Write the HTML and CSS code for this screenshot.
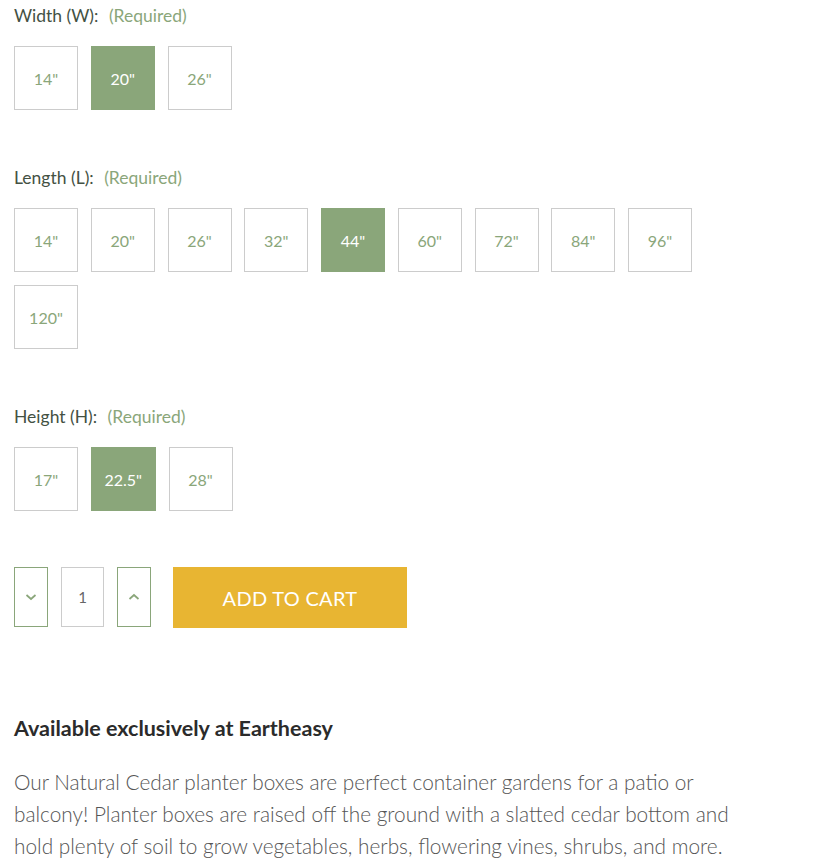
FILE: index.html
```html
<!DOCTYPE html>
<html lang="en">
<head>
<meta charset="utf-8">
<title>Planter options</title>
<link rel="stylesheet" href="styles.css">
</head>
<body>
<div class="product">
  <div class="field field-width">
    <div class="field-label">Width (W): <span class="req">(Required)</span></div>
    <div class="options">
      <span class="opt">14"</span>
      <span class="opt sel">20"</span>
      <span class="opt">26"</span>
    </div>
  </div>

  <div class="field field-length">
    <div class="field-label">Length (L): <span class="req">(Required)</span></div>
    <div class="options">
      <span class="opt">14"</span>
      <span class="opt">20"</span>
      <span class="opt">26"</span>
      <span class="opt">32"</span>
      <span class="opt sel">44"</span>
      <span class="opt">60"</span>
      <span class="opt">72"</span>
      <span class="opt">84"</span>
      <span class="opt">96"</span>
      <span class="opt">120"</span>
    </div>
  </div>

  <div class="field field-height">
    <div class="field-label">Height (H): <span class="req">(Required)</span></div>
    <div class="options">
      <span class="opt">17"</span>
      <span class="opt sel wide">22.5"</span>
      <span class="opt">28"</span>
    </div>
  </div>

  <div class="cart-row">
    <button class="qty-btn" aria-label="Decrease">
      <svg width="12" height="8" viewBox="0 0 12 8"><path d="M1.5 2 L6 6 L10.5 2" fill="none" stroke="#8aa67a" stroke-width="1.7"/></svg>
    </button>
    <div class="qty">1</div>
    <button class="qty-btn" aria-label="Increase">
      <svg width="12" height="8" viewBox="0 0 12 8"><path d="M1.5 6 L6 2 L10.5 6" fill="none" stroke="#8aa67a" stroke-width="1.7"/></svg>
    </button>
    <button class="add">ADD TO CART</button>
  </div>

  <h3 class="avail">Available exclusively at Eartheasy</h3>
  <p class="desc">Our Natural Cedar planter boxes are perfect container gardens for a patio or balcony! Planter boxes are raised off the ground with a slatted cedar bottom and hold plenty of soil to grow vegetables, herbs, flowering vines, shrubs, and more.</p>
</div>
</body>
</html>
```

FILE: styles.css
```css
html, body {
  margin: 0;
  padding: 0;
  background: #fff;
}

body {
  font-family: Lato, "Open Sans", sans-serif;
}

.product {
  padding: 4px 14px 0 14px;
  width: 740px;
}

.field-label {
  font-size: 17.5px;
  line-height: 24px;
  color: #435143;
}

.req {
  color: #8aa67a;
  margin-left: 6px;
}

.options {
  display: flex;
  flex-wrap: wrap;
  gap: 13px 12.75px;
  margin-top: 18px;
}

.opt {
  box-sizing: border-box;
  width: 64px;
  height: 64px;
  border: 1px solid #cccccc;
  display: flex;
  align-items: center;
  justify-content: center;
  font-size: 16px;
  color: #8aa67a;
  background: #fff;
}

.opt.wide {
  width: 65px;
}

.opt.sel {
  background: #8aa67a;
  border-color: #8aa67a;
  color: #fff;
}

.field-width {
  margin-bottom: 56px;
}

.field-length {
  margin-bottom: 56px;
}

.field-height {
  margin-bottom: 56px;
}

.cart-row {
  display: flex;
  align-items: flex-start;
  height: 61px;
}

.qty-btn {
  box-sizing: border-box;
  width: 34px;
  height: 60px;
  border: 1px solid #8aa67a;
  background: #fff;
  padding: 0;
  display: flex;
  align-items: center;
  justify-content: center;
  margin: 0;
}

.qty {
  box-sizing: border-box;
  width: 43px;
  height: 60px;
  border: 1px solid #cccccc;
  margin: 0 13px;
  display: flex;
  align-items: center;
  justify-content: center;
  font-size: 15px;
  color: #666;
}

.add {
  margin-left: 22px;
  width: 234px;
  height: 61px;
  background: #e8b532;
  border: none;
  color: #fff;
  font-family: Lato, sans-serif;
  font-size: 20px;
  letter-spacing: 0.3px;
  padding: 0;
}

.avail {
  font-size: 21.5px;
  line-height: 28px;
  font-weight: 700;
  color: #2b2b2b;
  margin: 86px 0 24px 0;
}

.desc {
  font-size: 20.8px;
  line-height: 32px;
  font-weight: 300;
  color: #555;
  margin: 0;
}
```
